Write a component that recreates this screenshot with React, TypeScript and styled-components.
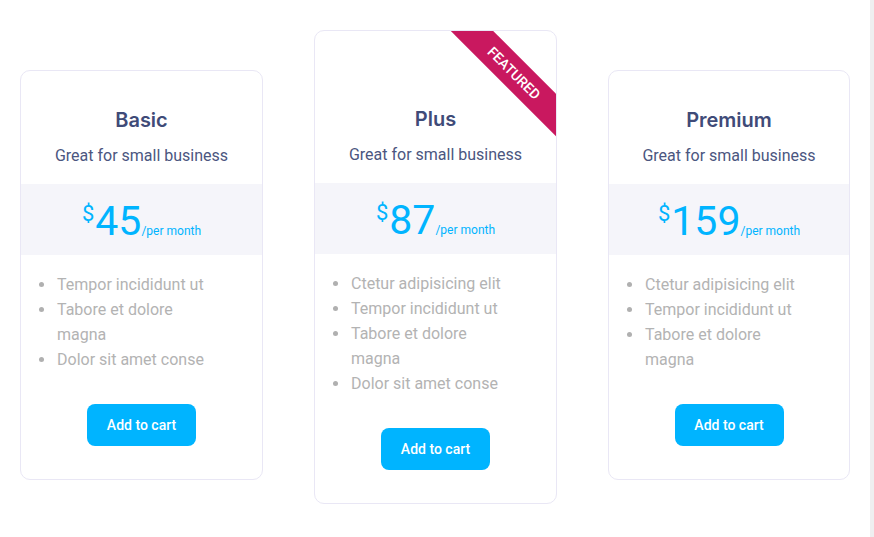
import React from "react";
import styled, { createGlobalStyle } from "styled-components";

const Global = createGlobalStyle`
  html, body { margin: 0; padding: 0; background: #ffffff; overflow: hidden; }
  body { font-family: Roboto, "Liberation Sans", sans-serif; }
  * { box-sizing: border-box; }
`;

const Page = styled.div`
  display: flex;
  width: 874px;
  height: 537px;
`;

const Main = styled.main`
  flex: 1;
  display: flex;
  align-items: flex-start;
  gap: 51px;
  padding: 70px 20px 0 20px;
`;

const Rail = styled.div`
  width: 4px;
  background: #efeff0;
`;

const Card = styled.div<{ $featured?: boolean; $w: number }>`
  position: relative;
  flex-shrink: 0;
  width: ${(p) => p.$w}px;
  margin-top: ${(p) => (p.$featured ? "-40px" : "0")};
  padding: ${(p) => (p.$featured ? "76px" : "37px")} 0 33px;
  border: 1px solid #e9e7f5;
  border-radius: 10px;
  background: #fff;
  overflow: hidden;
  display: flex;
  flex-direction: column;
  align-items: center;
`;

const Title = styled.h3`
  margin: 0;
  font-family: Inter, "Noto Sans", sans-serif;
  font-weight: 600;
  font-size: 20px;
  line-height: 24px;
  color: #3f4b78;
`;

const Subtitle = styled.p`
  margin: 13px 0 17px;
  font-size: 16px;
  line-height: 22px;
  color: #4b5680;
`;

const PriceBand = styled.div`
  align-self: stretch;
  height: 71px;
  background: #f5f5fa;
  display: flex;
  align-items: center;
  justify-content: center;
  color: #00b4ff;
`;

const Price = styled.div`
  display: flex;
  align-items: baseline;
  padding-top: 2px;
`;

const Currency = styled.span`
  font-size: 22px;
  align-self: flex-start;
  margin-top: 2px;
  margin-right: 1px;
`;

const Amount = styled.span`
  font-size: 41px;
  line-height: 44px;
`;

const Period = styled.span`
  font-size: 12px;
`;

const Features = styled.ul`
  align-self: flex-start;
  margin: 17px 0 0 36px;
  padding: 0;
  width: 158px;
  list-style: none;
`;

const Feature = styled.li`
  position: relative;
  font-size: 16px;
  line-height: 25px;
  color: #b3b3b3;
  &::before {
    content: "";
    position: absolute;
    left: -18px;
    top: 10px;
    width: 5px;
    height: 5px;
    border-radius: 50%;
    background: #b0b0b0;
  }
`;

const CartButton = styled.button`
  margin-top: 32px;
  width: 109px;
  height: 42px;
  border: none;
  border-radius: 8px;
  background: #00b4ff;
  color: #fff;
  font-family: Roboto, "Liberation Sans", sans-serif;
  font-weight: 500;
  font-size: 14px;
  cursor: pointer;
`;

const Ribbon = styled.div`
  position: absolute;
  top: 27px;
  right: -43px;
  width: 170px;
  height: 30px;
  transform: rotate(45deg);
  background: #c9185f;
  color: #fff;
  font-size: 14px;
  font-weight: 500;
  display: flex;
  align-items: center;
  justify-content: center;
  text-transform: uppercase;
`;

type Plan = {
  name: string;
  price: string;
  features: string[];
  featured?: boolean;
  width: number;
};

const plans: Plan[] = [
  {
    name: "Basic",
    price: "45",
    width: 243,
    features: ["Tempor incididunt ut", "Tabore et dolore magna", "Dolor sit amet conse"],
  },
  {
    name: "Plus",
    price: "87",
    width: 243,
    featured: true,
    features: [
      "Ctetur adipisicing elit",
      "Tempor incididunt ut",
      "Tabore et dolore magna",
      "Dolor sit amet conse",
    ],
  },
  {
    name: "Premium",
    price: "159",
    width: 242,
    features: ["Ctetur adipisicing elit", "Tempor incididunt ut", "Tabore et dolore magna"],
  },
];

export default function App() {
  return (
    <>
      <Global />
      <Page>
        <Main>
          {plans.map((p) => (
            <Card key={p.name} $featured={p.featured} $w={p.width}>
              {p.featured && <Ribbon>Featured</Ribbon>}
              <Title>{p.name}</Title>
              <Subtitle>Great for small business</Subtitle>
              <PriceBand>
                <Price>
                  <Currency>$</Currency>
                  <Amount>{p.price}</Amount>
                  <Period>/per month</Period>
                </Price>
              </PriceBand>
              <Features>
                {p.features.map((f) => (
                  <Feature key={f}>{f}</Feature>
                ))}
              </Features>
              <CartButton>Add to cart</CartButton>
            </Card>
          ))}
        </Main>
        <Rail />
      </Page>
    </>
  );
}
